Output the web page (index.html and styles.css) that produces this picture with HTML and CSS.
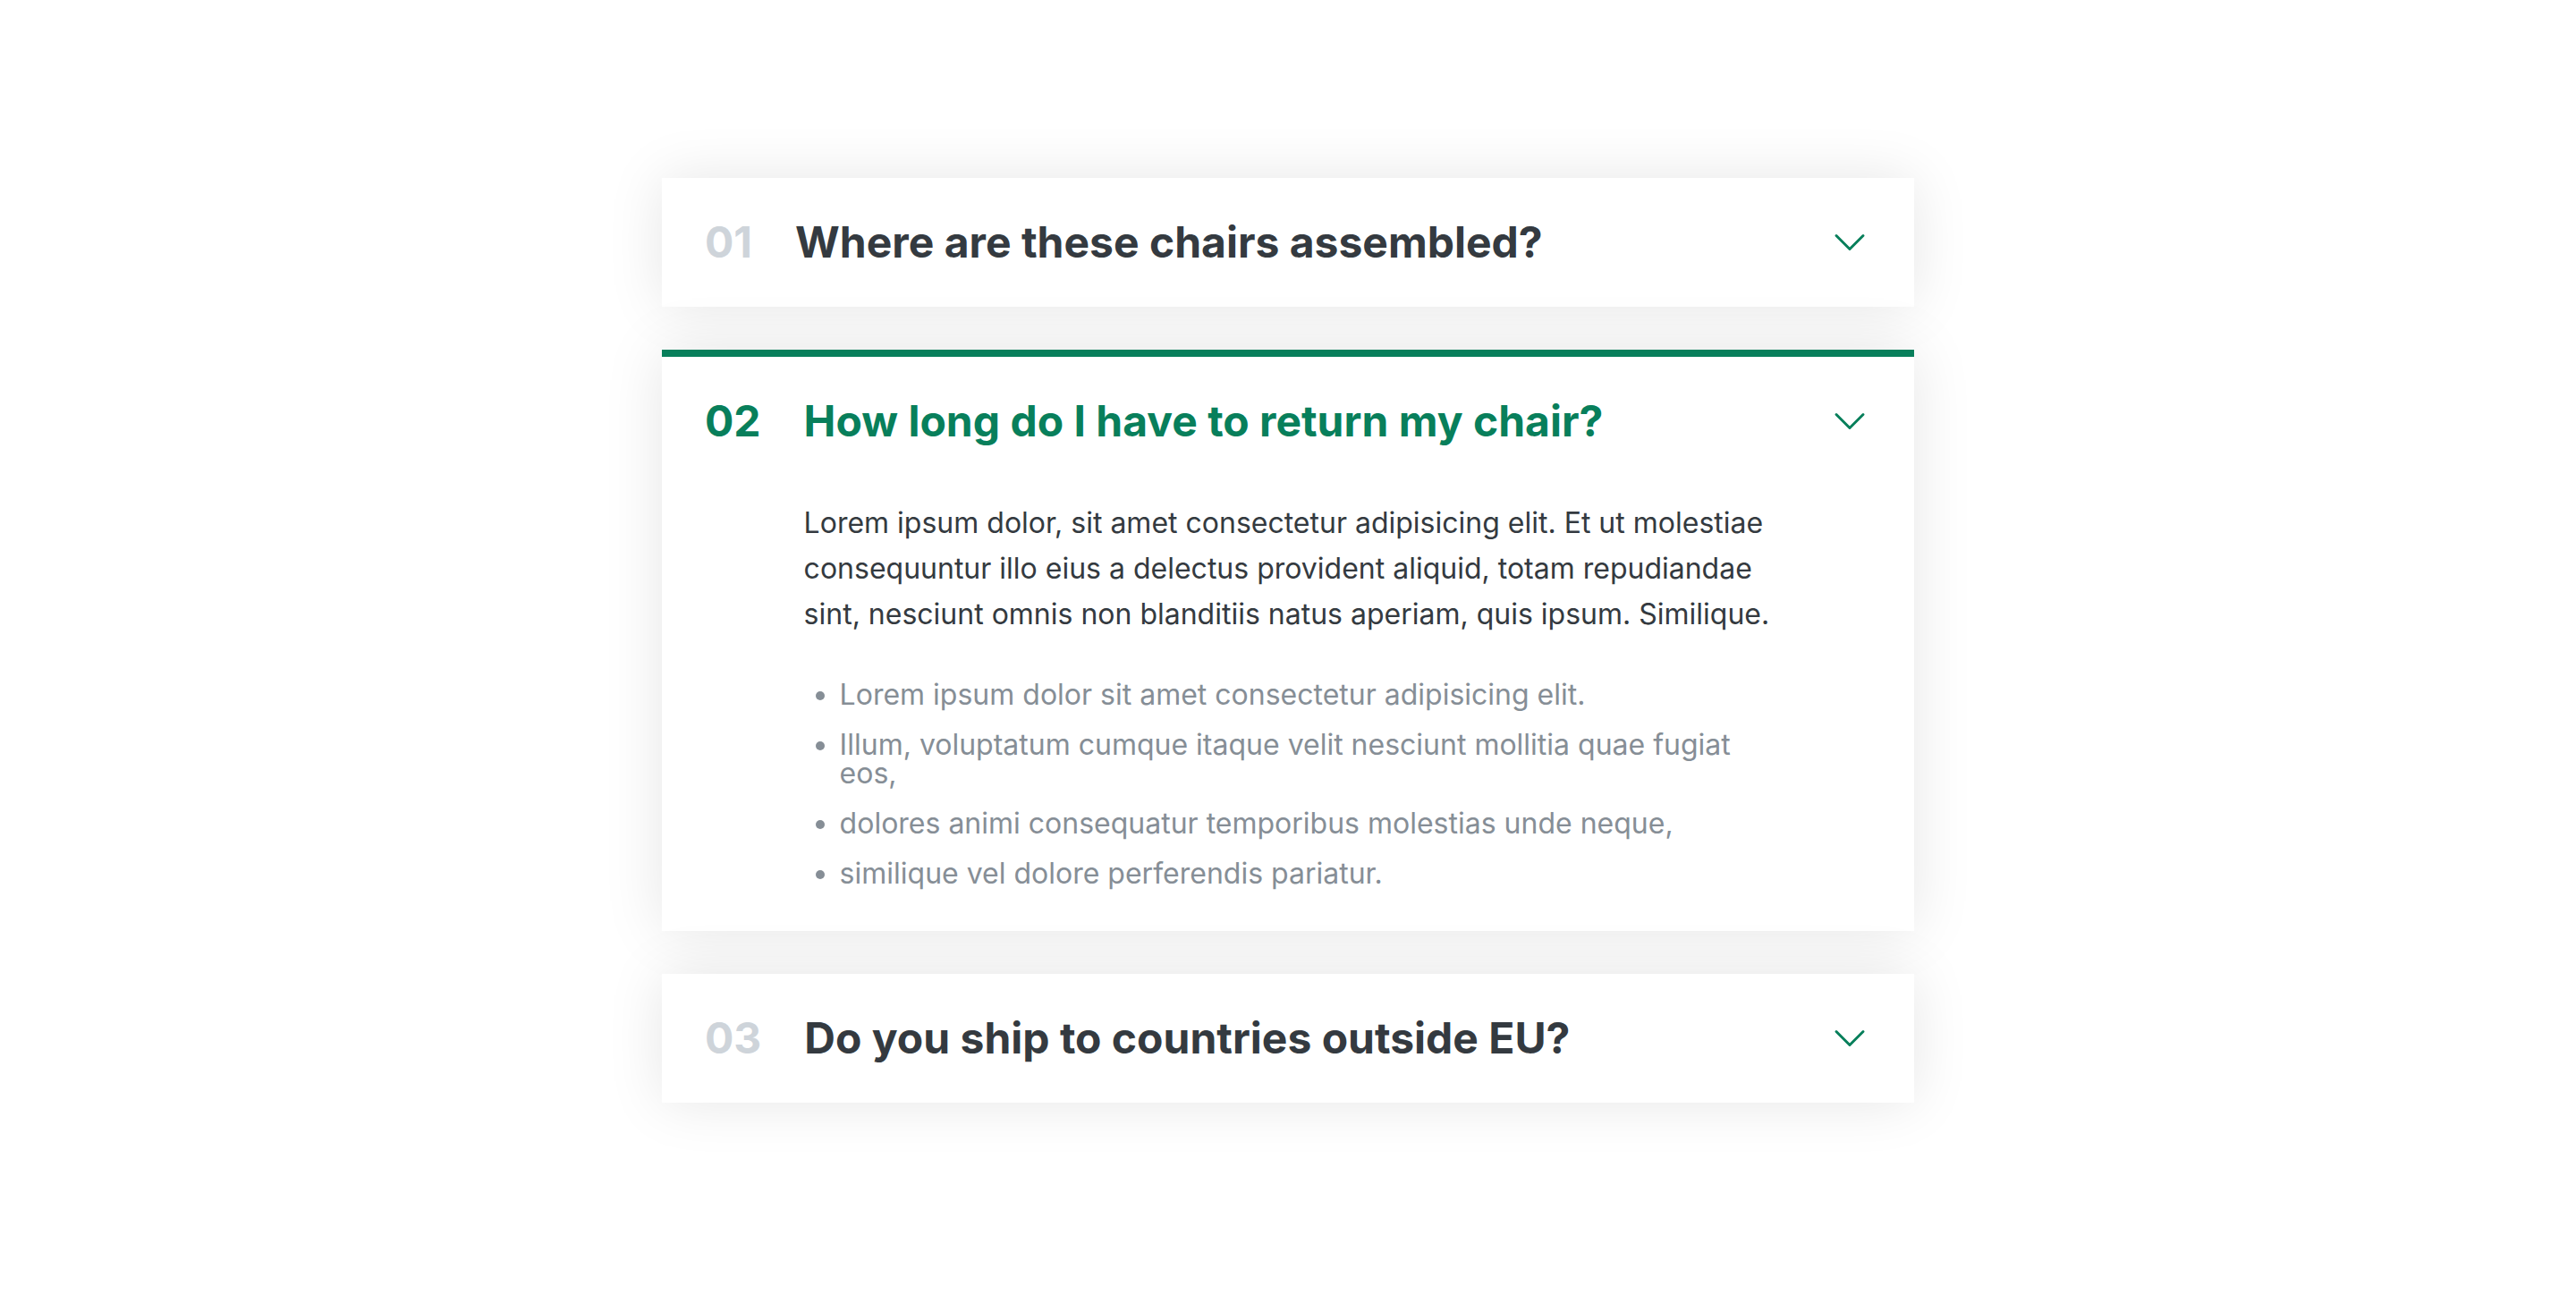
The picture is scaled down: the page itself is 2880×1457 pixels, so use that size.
FILE: index.html
```html
<!DOCTYPE html>
<html lang="en">
<head>
<meta charset="utf-8">
<title>Accordion</title>
<link rel="stylesheet" href="styles.css">
</head>
<body>
<div class="accordion">
  <div class="item">
    <p class="number">01</p>
    <p class="text">Where are these chairs assembled?</p>
    <svg class="icon" viewBox="0 0 24 24" fill="none" stroke-width="1.5"><path stroke-linecap="round" stroke-linejoin="round" d="M19.5 8.25l-7.5 7.5-7.5-7.5"/></svg>
  </div>
  <div class="item open">
    <p class="number">02</p>
    <p class="text">How long do I have to return my chair?</p>
    <svg class="icon" viewBox="0 0 24 24" fill="none" stroke-width="1.5"><path stroke-linecap="round" stroke-linejoin="round" d="M19.5 8.25l-7.5 7.5-7.5-7.5"/></svg>
    <div class="hidden-box">
      <p>Lorem ipsum dolor, sit amet consectetur adipisicing elit. Et ut molestiae consequuntur illo eius a delectus provident aliquid, totam repudiandae sint, nesciunt omnis non blanditiis natus aperiam, quis ipsum. Similique.</p>
      <ul>
        <li>Lorem ipsum dolor sit amet consectetur adipisicing elit.</li>
        <li>Illum, voluptatum cumque itaque velit nesciunt mollitia quae fugiat eos,</li>
        <li>dolores animi consequatur temporibus molestias unde neque,</li>
        <li>similique vel dolore perferendis pariatur.</li>
      </ul>
    </div>
  </div>
  <div class="item">
    <p class="number">03</p>
    <p class="text">Do you ship to countries outside EU?</p>
    <svg class="icon" viewBox="0 0 24 24" fill="none" stroke-width="1.5"><path stroke-linecap="round" stroke-linejoin="round" d="M19.5 8.25l-7.5 7.5-7.5-7.5"/></svg>
  </div>
</div>
</body>
</html>
```
FILE: styles.css
```css
* {
  margin: 0;
  padding: 0;
  box-sizing: border-box;
}

body {
  font-family: Inter, "Noto Sans", sans-serif;
  color: #343a40;
  line-height: 1;
  background: #fff;
}

.accordion {
  width: 1400px;
  margin: 199px auto 200px;
  display: flex;
  flex-direction: column;
  gap: 48px;
}

.item {
  box-shadow: 0 0 64px rgba(0, 0, 0, 0.1);
  padding: 48px;
  display: grid;
  grid-template-columns: auto 1fr auto;
  column-gap: 48px;
  row-gap: 64px;
  align-items: center;
  background: #fff;
}

.number,
.text {
  font-size: 48px;
  font-weight: 700;
}

.number {
  color: #ced4da;
}

.icon {
  width: 48px;
  height: 48px;
  stroke: #087f5b;
}

.hidden-box {
  grid-column: 2 / 3;
  font-size: 32px;
}

.hidden-box p {
  line-height: 1.6;
  margin-bottom: 48px;
}

.hidden-box ul {
  color: #868e96;
  margin-left: 40px;
  display: flex;
  flex-direction: column;
  gap: 24px;
}

.open {
  border-top: 8px solid #087f5b;
}

.open .number,
.open .text {
  color: #087f5b;
}
```
